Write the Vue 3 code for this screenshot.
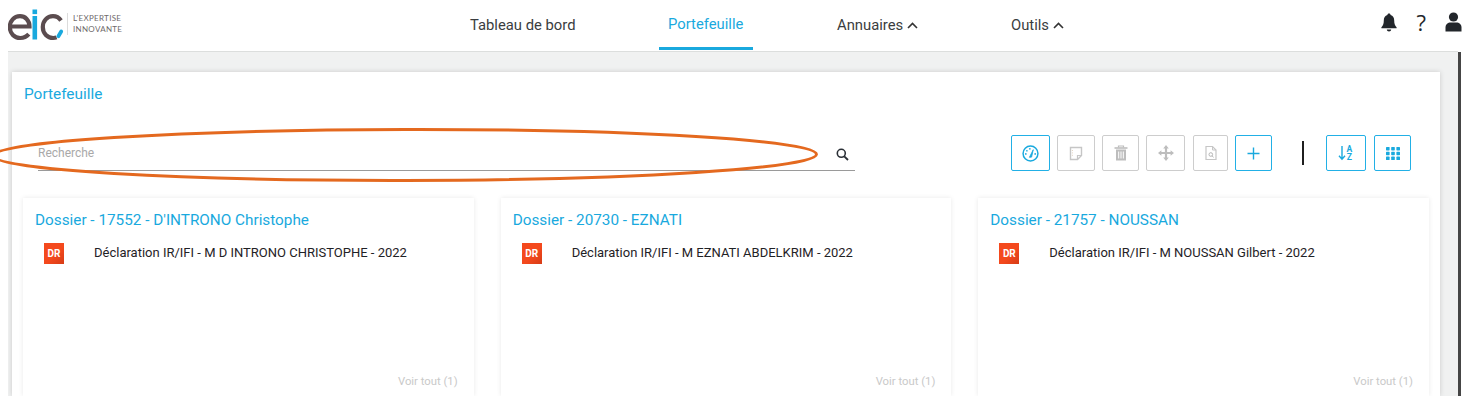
<script setup>
const dossiers = [
  { title: "Dossier - 17552 - D'INTRONO Christophe", doc: "Déclaration IR/IFI - M D INTRONO CHRISTOPHE - 2022" },
  { title: "Dossier - 20730 - EZNATI", doc: "Déclaration IR/IFI - M EZNATI ABDELKRIM - 2022" },
  { title: "Dossier - 21757 - NOUSSAN", doc: "Déclaration IR/IFI - M NOUSSAN Gilbert - 2022" }
]
</script>

<template>
  <div class="page">
    <header class="topbar">
      <div class="logo">
        <svg class="logo-mark" width="56" height="34" viewBox="0 0 56 34">
          <path d="M2 18.5H21.5C21.5 12 17 8.2 12 8.2C6 8.2 1.8 13 1.8 19C1.8 25.5 6.5 30 12.2 30C15.8 30 18.5 28.8 20.8 26.2" fill="none" stroke="#5b4c4f" stroke-width="4.2"/>
          <rect x="24.5" y="1.5" width="4.6" height="4.6" fill="#19a9de"/>
          <rect x="24.5" y="8" width="4.6" height="23.5" fill="#19a9de"/>
          <path d="M53 12.5C51 9.6 48 8.2 45 8.2C39 8.2 34.8 13 34.8 19C34.8 25.5 39.5 30 45.2 30C46.5 30 47.6 29.8 48.6 29.4" fill="none" stroke="#5b4c4f" stroke-width="4.2"/>
          <path d="M53.2 23.5L50.4 28.2" fill="none" stroke="#19a9de" stroke-width="3.8" stroke-linecap="round"/>
        </svg>
        <span class="logo-text">L'EXPERTISE<br />INNOVANTE</span>
      </div>
      <nav class="nav">
        <a class="tab tab-board">Tableau de bord</a>
        <a class="tab tab-active">Portefeuille</a>
        <a class="tab tab-dir">Annuaires
          <svg width="11" height="7" viewBox="0 0 11 7"><path d="M1 6L5.5 1.5L10 6" fill="none" stroke="#333" stroke-width="1.6"/></svg>
        </a>
        <a class="tab tab-tools">Outils
          <svg width="11" height="7" viewBox="0 0 11 7"><path d="M1 6L5.5 1.5L10 6" fill="none" stroke="#333" stroke-width="1.6"/></svg>
        </a>
      </nav>
      <div class="actions">
        <svg width="16" height="19" viewBox="0 0 16 19"><path d="M8 0.5C9 0.5 9.6 1.2 9.6 2.1C12 2.8 13.2 4.8 13.2 7.5C13.2 11 14 12.6 15.6 14.2V15.3H0.4V14.2C2 12.6 2.8 11 2.8 7.5C2.8 4.8 4 2.8 6.4 2.1C6.4 1.2 7 0.5 8 0.5Z" fill="#22262b"/><path d="M5.8 16.4H10.2C10.2 17.6 9.2 18.4 8 18.4C6.8 18.4 5.8 17.6 5.8 16.4Z" fill="#22262b"/></svg>
        <span class="help">?</span>
        <svg width="17" height="20" viewBox="0 0 17 20"><circle cx="8.5" cy="5" r="4.6" fill="#22262b"/><path d="M0.5 19.5V15.5C0.5 12.5 3 10.6 5.5 10.6H11.5C14 10.6 16.5 12.5 16.5 15.5V19.5Z" fill="#22262b"/></svg>
      </div>
    </header>

    <main class="content">
      <section class="panel">
        <h1 class="panel-title">Portefeuille</h1>
        <div class="tools">
          <div class="search">
            <span class="placeholder">Recherche</span>
            <svg width="13" height="13" viewBox="0 0 13 13"><circle cx="5.3" cy="5.3" r="4" fill="none" stroke="#2a2f36" stroke-width="1.6"/><path d="M8.3 8.3L12 12" stroke="#2a2f36" stroke-width="1.8"/></svg>
          </div>
          <div class="buttons">
            <button class="btn on w39">
              <svg width="17" height="17" viewBox="0 0 16 16"><circle cx="8" cy="8" r="7" fill="none" stroke="#19a9de" stroke-width="1.4"/><path d="M7 11.6L10.6 4.4L9 11.4Z" fill="#19a9de" stroke="#19a9de" stroke-width=".8"/><path d="M3.6 8.4h.01M4.6 5.4h.01M7.4 3.6h.01M12.4 8.4h.01" stroke="#19a9de" stroke-width="1.6" stroke-linecap="round"/></svg>
            </button>
            <button class="btn off w38">
              <svg width="14" height="15" viewBox="0 0 14 15"><path d="M1.5 1.5H12.5V9.5L8.5 13.5H1.5Z" fill="#fff" stroke="#c6c6c6" stroke-width="1.4"/><path d="M12.5 9.5H8.5V13.5" fill="none" stroke="#c6c6c6" stroke-width="1.2"/><path d="M3.4 4v7" stroke="#e2d3c0" stroke-width="1" stroke-dasharray="1 1.4"/></svg>
            </button>
            <button class="btn off w37">
              <svg width="14" height="16" viewBox="0 0 14 16"><path d="M0.5 3H13.5" stroke="#bdbdbd" stroke-width="1.6"/><path d="M4.5 2.5V1H9.5V2.5" fill="none" stroke="#bdbdbd" stroke-width="1.2"/><path d="M2 4.5H12V15.5H2Z" fill="#bdbdbd"/><path d="M4.7 6.5V13.5M7 6.5V13.5M9.3 6.5V13.5" stroke="#fff" stroke-width="1"/></svg>
            </button>
            <button class="btn off w39">
              <svg width="16" height="16" viewBox="0 0 16 16"><path d="M8 0L10.8 3.4H9.1V6.9H12.6V5.2L16 8L12.6 10.8V9.1H9.1V12.6H10.8L8 16L5.2 12.6H6.9V9.1H3.4V10.8L0 8L3.4 5.2V6.9H6.9V3.4H5.2Z" fill="#bdbdbd"/></svg>
            </button>
            <button class="btn off w35 nudge">
              <svg width="12" height="16" viewBox="0 0 12 15"><path d="M1 1H7.5L11 4.5V14H1Z" fill="#fff" stroke="#c6c6c6" stroke-width="1.2"/><path d="M7.5 1V4.5H11" fill="none" stroke="#c6c6c6" stroke-width="1"/><circle cx="5.8" cy="9" r="1.8" fill="none" stroke="#b5b5b5" stroke-width="1"/><path d="M7 10.3L8.6 11.8" stroke="#b5b5b5" stroke-width="1"/></svg>
            </button>
            <button class="btn on w37">
              <svg width="13" height="13" viewBox="0 0 13 13"><path d="M6.5 .5V12.5M.5 6.5H12.5" stroke="#19a9de" stroke-width="1.4"/></svg>
            </button>
            <span class="sep"></span>
            <button class="btn on w40">
              <svg width="16" height="16" viewBox="0 0 16 16"><path d="M4 1V14M1 10.8L4 14.2L7 10.8" fill="none" stroke="#19a9de" stroke-width="1.4"/><text x="8.6" y="6.8" class="az">A</text><text x="8.8" y="15.4" class="az">Z</text></svg>
            </button>
            <button class="btn on w37 nudge">
              <svg width="14" height="13" viewBox="0 0 14 13"><g fill="#19a9de"><rect x="0" y="0" width="3.6" height="3.4" rx=".6"/><rect x="5.2" y="0" width="3.6" height="3.4" rx=".6"/><rect x="10.4" y="0" width="3.6" height="3.4" rx=".6"/><rect x="0" y="4.8" width="3.6" height="3.4" rx=".6"/><rect x="5.2" y="4.8" width="3.6" height="3.4" rx=".6"/><rect x="10.4" y="4.8" width="3.6" height="3.4" rx=".6"/><rect x="0" y="9.6" width="3.6" height="3.4" rx=".6"/><rect x="5.2" y="9.6" width="3.6" height="3.4" rx=".6"/><rect x="10.4" y="9.6" width="3.6" height="3.4" rx=".6"/></g></svg>
            </button>
          </div>
        </div>
        <div class="cards">
          <article v-for="d in dossiers" :key="d.title" class="card">
            <h2 class="card-title">{{ d.title }}</h2>
            <div class="doc">
              <span class="doc-badge">DR</span>
              <span class="doc-name">{{ d.doc }}</span>
            </div>
            <a class="more">Voir tout (1)</a>
          </article>
        </div>
      </section>
    </main>

    <svg class="annotation" width="830" height="60" viewBox="0 0 830 60">
      <ellipse cx="405" cy="28" rx="411.5" ry="25.5" transform="rotate(-0.1 405 28)" fill="none" stroke="#e4691f" stroke-width="3"/>
    </svg>
  </div>
</template>

<style scoped>
.page {
  position: relative;
  width: 1468px;
  height: 413px;
  overflow: hidden;
  background: #fff;
  font-family: Roboto, "Liberation Sans", sans-serif;
}
.topbar {
  display: flex;
  align-items: center;
  height: 51px;
  border-bottom: 1px solid #dcdedd;
  margin-left: 8px;
  width: 1450px;
}
.logo {
  display: flex;
  align-items: center;
  width: 451px;
  height: 51px;
  box-sizing: border-box;
}
.logo-mark {
  flex: none;
  margin-top: -1px;
}
.logo-text {
  margin-left: 3px;
  padding-left: 5px;
  border-left: 1px solid #dcdcdc;
  color: #6f6a6b;
  font-family: Lato, sans-serif;
  font-size: 8px;
  line-height: 11px;
  letter-spacing: 0.3px;
  margin-top: -3px;
}
.nav {
  display: flex;
  align-items: stretch;
  height: 51px;
}
.tab {
  display: flex;
  align-items: center;
  gap: 4px;
  height: 47px;
  color: #3a3d40;
  font-size: 14.8px;
  padding-top: 3px;
  box-sizing: border-box;
  white-space: nowrap;
}
.tab svg {
  margin-top: 1px;
}
.tab-board {
  margin-left: 11px;
  width: 189px;
}
.tab-active {
  width: 94px;
  height: 50px;
  padding: 0 0 0 9px;
  color: #19a9de;
  border-bottom: 3px solid #19a9de;
}
.tab-dir {
  margin-left: 84px;
  width: 174px;
}
.tab-active,
.tab-dir,
.tab-tools {
  flex: none;
}
.actions {
  margin-left: auto;
  display: flex;
  align-items: center;
  margin-right: -4px;
  margin-top: -7px;
}
.help {
  margin: 0 19px 0 20px;
  font-size: 22px;
  color: #22262b;
  font-family: "Open Sans", sans-serif;
}
.content {
  margin-left: 8px;
  width: 1453px;
  height: 344px;
  background: #f0f1f1;
  border-right: 3px solid #454545;
  padding: 20px 0 0 4px;
  box-sizing: border-box;
  overflow: hidden;
}
.panel {
  width: 1428px;
  height: 324px;
  background: #fff;
  box-shadow: 0 0 5px rgba(0, 0, 0, 0.16);
}
.panel-title {
  margin: 0;
  padding: 12px 0 0 12px;
  font-size: 15.4px;
  line-height: 20px;
  font-weight: 400;
  color: #19a9de;
}
.tools {
  display: flex;
  margin-top: 31px;
  height: 36px;
  padding: 0 29px 0 26px;
}
.search {
  display: flex;
  align-items: center;
  justify-content: space-between;
  width: 817px;
  height: 36px;
  box-sizing: border-box;
  border-bottom: 1px solid #9a9a9a;
  padding: 0 6px 0 0;
}
.search svg {
  margin-top: 3px;
}
.placeholder {
  font-size: 12px;
  color: #a9a9a9;
  margin-top: 1px;
}
.buttons {
  margin-left: auto;
  display: flex;
  align-items: center;
  gap: 7px;
}
.btn {
  display: flex;
  align-items: center;
  justify-content: center;
  flex: none;
  height: 36px;
  padding: 0;
  background: #fff;
  border-radius: 2px;
  box-sizing: border-box;
}
.on {
  border: 1.5px solid #22b0e6;
}
.off {
  border: 1.5px solid #cdcdcd;
}
.w35 { width: 35px; }
.w37 { width: 37px; }
.w38 { width: 38px; }
.w39 { width: 39px; }
.w40 { width: 40px; }
.nudge { margin-left: 1px; }
.sep {
  width: 2px;
  height: 24px;
  margin: 0 15px 0 23px;
  background: #1f1f1f;
}
.az {
  font-family: Roboto, sans-serif;
  font-size: 8.6px;
  font-weight: 700;
  fill: #19a9de;
}
.cards {
  display: grid;
  grid-template-columns: repeat(3, 1fr);
  gap: 27px;
  margin-top: 27px;
  padding: 0 11px;
}
.card {
  position: relative;
  height: 198px;
  padding: 12px 12px 0;
  box-sizing: border-box;
  background: #fff;
  box-shadow: 0 0 5px rgba(0, 0, 0, 0.09);
}
.card-title {
  margin: 0;
  font-size: 15.3px;
  line-height: 20px;
  font-weight: 400;
  color: #19a9de;
}
.doc {
  display: flex;
  align-items: center;
  margin-top: 13px;
  padding-left: 9px;
}
.doc-badge {
  display: flex;
  align-items: center;
  justify-content: center;
  flex: none;
  width: 20px;
  height: 21px;
  background: linear-gradient(135deg, #f4491d 55%, #d63c16);
  color: #fff;
  font-size: 10px;
  font-weight: 700;
}
.doc-name {
  margin-left: 30px;
  font-size: 13px;
  color: #1f2226;
  margin-top: -3px;
}
.more {
  position: absolute;
  right: 16px;
  top: 177px;
  font-size: 11.3px;
  color: #c9c9c9;
}
.annotation {
  position: absolute;
  left: 0;
  top: 127px;
  pointer-events: none;
}
</style>
